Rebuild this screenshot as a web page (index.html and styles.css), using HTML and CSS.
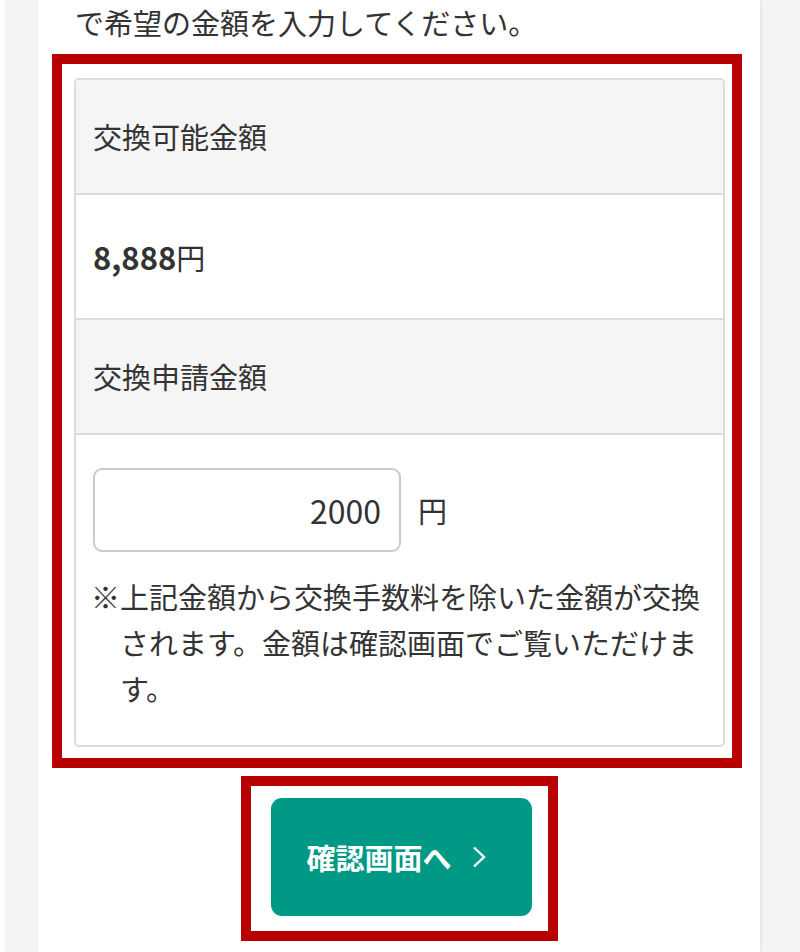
FILE: index.html
```html
<!DOCTYPE html>
<html lang="ja">
<head>
    <meta charset="UTF-8">
    <meta name="viewport" content="width=device-width, initial-scale=1.0">
    <title>交換申請</title>
    <link rel="stylesheet" href="styles.css">
</head>
<body>

    <div class="card">
        <p class="lead">で希望の金額を入力してください。</p>

        <!-- 入力フォーム -->
        <div class="mark mark-form">
            <div class="amount-table">
                <div class="cell cell-head">交換可能金額</div>
                <div class="cell cell-body">
                    <span class="amount">8,888</span>円
                </div>
                <div class="cell cell-head">交換申請金額</div>
                <div class="cell cell-body cell-input">
                    <div class="input-row">
                        <input class="amount-input" type="text" value="2000">
                        <span class="unit">円</span>
                    </div>
                    <p class="note">※上記金額から交換手数料を除いた金額が交換されます。金額は確認画面でご覧いただけます。</p>
                </div>
            </div>
        </div>

        <!-- ボタン -->
        <div class="mark mark-button">
            <button class="next-button" type="button">
                確認画面へ
                <svg class="chevron" width="14" height="22" viewBox="0 0 14 22">
                    <path d="M2 1.5 L12 11 L2 20.5" fill="none" stroke="#fff" stroke-width="2.4"/>
                </svg>
            </button>
        </div>
    </div>

</body>
</html>
```

FILE: styles.css
```css
body {
    margin: 0;
    background-color: #f4f4f4;
    font-family: 'Noto Sans CJK JP', 'Noto Sans', sans-serif;
    color: #333;
    border-left: 5px solid #fff;
}
.card {
    margin-left: 33px;
    width: 722px;
    min-height: 952px;
    background-color: #fff;
    box-shadow: 1px 0 3px rgba(0, 0, 0, 0.08);
    box-sizing: border-box;
}
.lead {
    margin: 0;
    padding: 0 0 0 37px;
    font-size: 29px;
    line-height: 45px;
}
.mark {
    border: 10px solid #b80000;
    box-sizing: border-box;
}
.mark-form {
    margin: 9px 0 0 14px;
    width: 690px;
    padding: 14px 7px 11px 12px;
}
.amount-table {
    border: 2px solid #dcdcdc;
    border-radius: 5px;
    overflow: hidden;
}
.cell {
    padding: 0 17px;
    font-size: 29px;
    border-bottom: 2px solid #dcdcdc;
}
.cell:last-child {
    border-bottom: none;
}
.cell-head {
    background-color: #f5f5f5;
    height: 113px;
    line-height: 113px;
}
.cell-body {
    height: 123px;
    line-height: 123px;
}
.amount {
    font-weight: bold;
    font-size: 31px;
}
.cell-input {
    height: auto;
    line-height: normal;
    padding-top: 33px;
    padding-bottom: 34px;
}
.input-row {
    display: flex;
    align-items: center;
    gap: 17px;
}
.amount-input {
    width: 308px;
    height: 84px;
    box-sizing: border-box;
    border: 2px solid #cacaca;
    border-radius: 9px;
    padding: 0 18px;
    text-align: right;
    font-family: inherit;
    font-size: 32px;
    color: #333;
    margin: 0;
}
.unit {
    font-size: 29px;
}
.note {
    margin: 21px 0 0 -2px;
    padding-left: 1em;
    text-indent: -1em;
    line-height: 46px;
}
.mark-button {
    width: 317px;
    margin: 8px auto 0;
    padding: 12px 16px 15px 20px;
}
.next-button {
    display: flex;
    align-items: center;
    justify-content: center;
    gap: 20px;
    width: 261px;
    height: 118px;
    border: none;
    border-radius: 11px;
    background-color: #009985;
    color: #fff;
    font-family: inherit;
    font-size: 29px;
    font-weight: bold;
    padding: 0 10px 0 0;
    cursor: pointer;
}
.chevron {
    display: block;
}
```
